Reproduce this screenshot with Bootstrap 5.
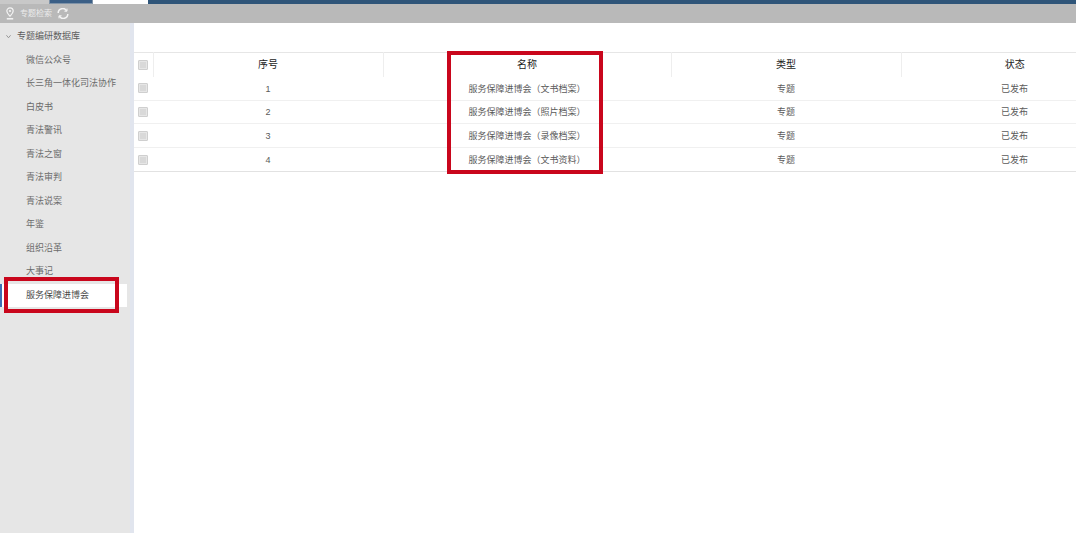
<!DOCTYPE html>
<html lang="zh-CN">
<head>
    <meta charset="UTF-8">
    <meta name="viewport" content="width=device-width, initial-scale=1.0">
    <title>专题检索</title>
    <link href="https://cdn.jsdelivr.net/npm/bootstrap@5.3.0/dist/css/bootstrap.min.css" rel="stylesheet">
    <style>
        html, body { height: 536px; overflow: hidden; background: #fff; }
        body { font-family: "Liberation Sans", "Noto Sans CJK SC", sans-serif; position: relative; }
        .app-shell { width: 1076px; height: 533px; overflow: hidden; }
        .top-strip { height: 4px; background: #2f5579; }
        .strip-gap { width: 49px; background: #c8c8c8; }
        .strip-tab { width: 44px; background: #3b5f86; border: 1px solid #7f93a8; border-top: 0; }
        .strip-active { width: 55px; background: #fff; }
        .tool-bar { height: 19px; background: #b9b9b9; color: #ececec; font-size: 8px; padding-left: 6px; }
        .tool-name { margin-left: 6px; margin-right: 5px; }
        .side-panel { width: 134px; flex: none; background: #e6e6e6; border-right: 4px solid #e1e5ee; font-size: 9px; color: #6b6b6b; padding-top: 2px; }
        .side-title { height: 23.5px; color: #5c5c5c; }
        .side-chevron { width: 5px; height: 5px; margin: 0 6px 0 6px; }
        .side-item { height: 23.5px; line-height: 23.5px; padding-left: 26px; white-space: nowrap; }
        .side-item.is-current { background: #fff; color: #484848; margin-right: 3px; border-left: 2px solid #3f6fb5; padding-left: 24px; }
        .data-area { padding-top: 29px; flex: 1; min-width: 0; }
        .data-table { width: 994px; table-layout: fixed; margin: 0; border-top: 1px solid #e6e6e6; }
        .data-table th, .data-table td { padding: 0; text-align: center; vertical-align: middle; border-bottom: 1px solid #f0f0f0; box-shadow: none; }
        .data-table th { height: 24px; font-size: 10px; font-weight: 400; color: #222; border-bottom: 0; }
        .data-table td { height: 24px; font-size: 9px; color: #5a5a5a; padding-top: 2px; }
        .data-table td:first-child { padding-top: 0; }
        .data-table tbody tr:nth-child(2) td { height: 23px; }
        .data-table tbody tr:last-child td { border-bottom-color: #e2e2e2; }
        .data-table th + th { border-left: 1px solid #eee; }
        .fake-check { display: block; width: 10px; height: 10px; margin: 0 0 0 4px; background: #d9d9d9; border: 1px solid #cfcfcf; border-radius: 1px; box-shadow: inset 0 0 0 1px #e6e6e6; }
        .mark-box { position: absolute; border: 4px solid #c9061c; pointer-events: none; }
        .mark-name { left: 447px; top: 51px; width: 156px; height: 123px; }
        .mark-menu { left: 4px; top: 277px; width: 115px; height: 36px; }
    </style>
</head>
<body>
    <div class="app-shell d-flex flex-column">
        <div class="top-strip d-flex flex-shrink-0">
            <div class="strip-gap"></div>
            <div class="strip-tab"></div>
            <div class="strip-active"></div>
        </div>
        <div class="tool-bar d-flex align-items-center flex-shrink-0">
            <svg width="8" height="13" viewBox="0 0 8 13" fill="none" stroke="#f4f4f4" stroke-width="1.2">
                <path d="M4 9.2C2.4 7.6.8 6.2.8 4.1a3.2 3.2 0 0 1 6.4 0C7.200 6.200 5.600 7.600 4 9.200Z"/>
                <circle cx="4" cy="4" r="1.1" fill="#f4f4f4" stroke="none"/>
                <path d="M.8 11.800h6.400" stroke-width="1.500"/>
            </svg>
            <span class="tool-name">专题检索</span>
            <svg width="12" height="11" viewBox="0 0 12 11" fill="none" stroke="#f4f4f4" stroke-width="1.500">
                <path d="M1.200 5A4.500 4.500 0 0 1 9.600 2.800"/>
                <path d="M10.800 6A4.500 4.500 0 0 1 2.400 8.200"/>
                <path d="M10 .6v2.600H7.400M2 10.400V7.800h2.600" stroke-width="1"/>
            </svg>
        </div>
        <div class="d-flex flex-grow-1">
            <div class="side-panel">
                <div class="side-title d-flex align-items-center">
                    <svg class="side-chevron" viewBox="0 0 6 6" fill="none" stroke="#888"><path d="M.5 1.5 3 4.500 5.500 1.500"/></svg>
                    <span>专题编研数据库</span>
                </div>
                <div class="side-item">微信公众号</div>
                <div class="side-item">长三角一体化司法协作</div>
                <div class="side-item">白皮书</div>
                <div class="side-item">青法警讯</div>
                <div class="side-item">青法之窗</div>
                <div class="side-item">青法审判</div>
                <div class="side-item">青法说案</div>
                <div class="side-item">年鉴</div>
                <div class="side-item">组织沿革</div>
                <div class="side-item">大事记</div>
                <div class="side-item is-current">服务保障进博会</div>
            </div>
            <div class="data-area">
                <table class="table data-table">
                    <colgroup>
                        <col style="width: 19px">
                        <col style="width: 230px">
                        <col style="width: 288px">
                        <col style="width: 230px">
                        <col style="width: 227px">
                    </colgroup>
                    <thead>
                        <tr>
                            <th><span class="fake-check"></span></th>
                            <th>序号</th>
                            <th>名称</th>
                            <th>类型</th>
                            <th>状态</th>
                        </tr>
                    </thead>
                    <tbody>
                        <tr><td><span class="fake-check"></span></td><td>1</td><td>服务保障进博会（文书档案）</td><td>专题</td><td>已发布</td></tr>
                        <tr><td><span class="fake-check"></span></td><td>2</td><td>服务保障进博会（照片档案）</td><td>专题</td><td>已发布</td></tr>
                        <tr><td><span class="fake-check"></span></td><td>3</td><td>服务保障进博会（录像档案）</td><td>专题</td><td>已发布</td></tr>
                        <tr><td><span class="fake-check"></span></td><td>4</td><td>服务保障进博会（文书资料）</td><td>专题</td><td>已发布</td></tr>
                    </tbody>
                </table>
            </div>
        </div>
    </div>
    <div class="mark-box mark-name"></div>
    <div class="mark-box mark-menu"></div>
    <script src="https://cdn.jsdelivr.net/npm/bootstrap@5.3.0/dist/js/bootstrap.bundle.min.js"></script>
</body>
</html>
